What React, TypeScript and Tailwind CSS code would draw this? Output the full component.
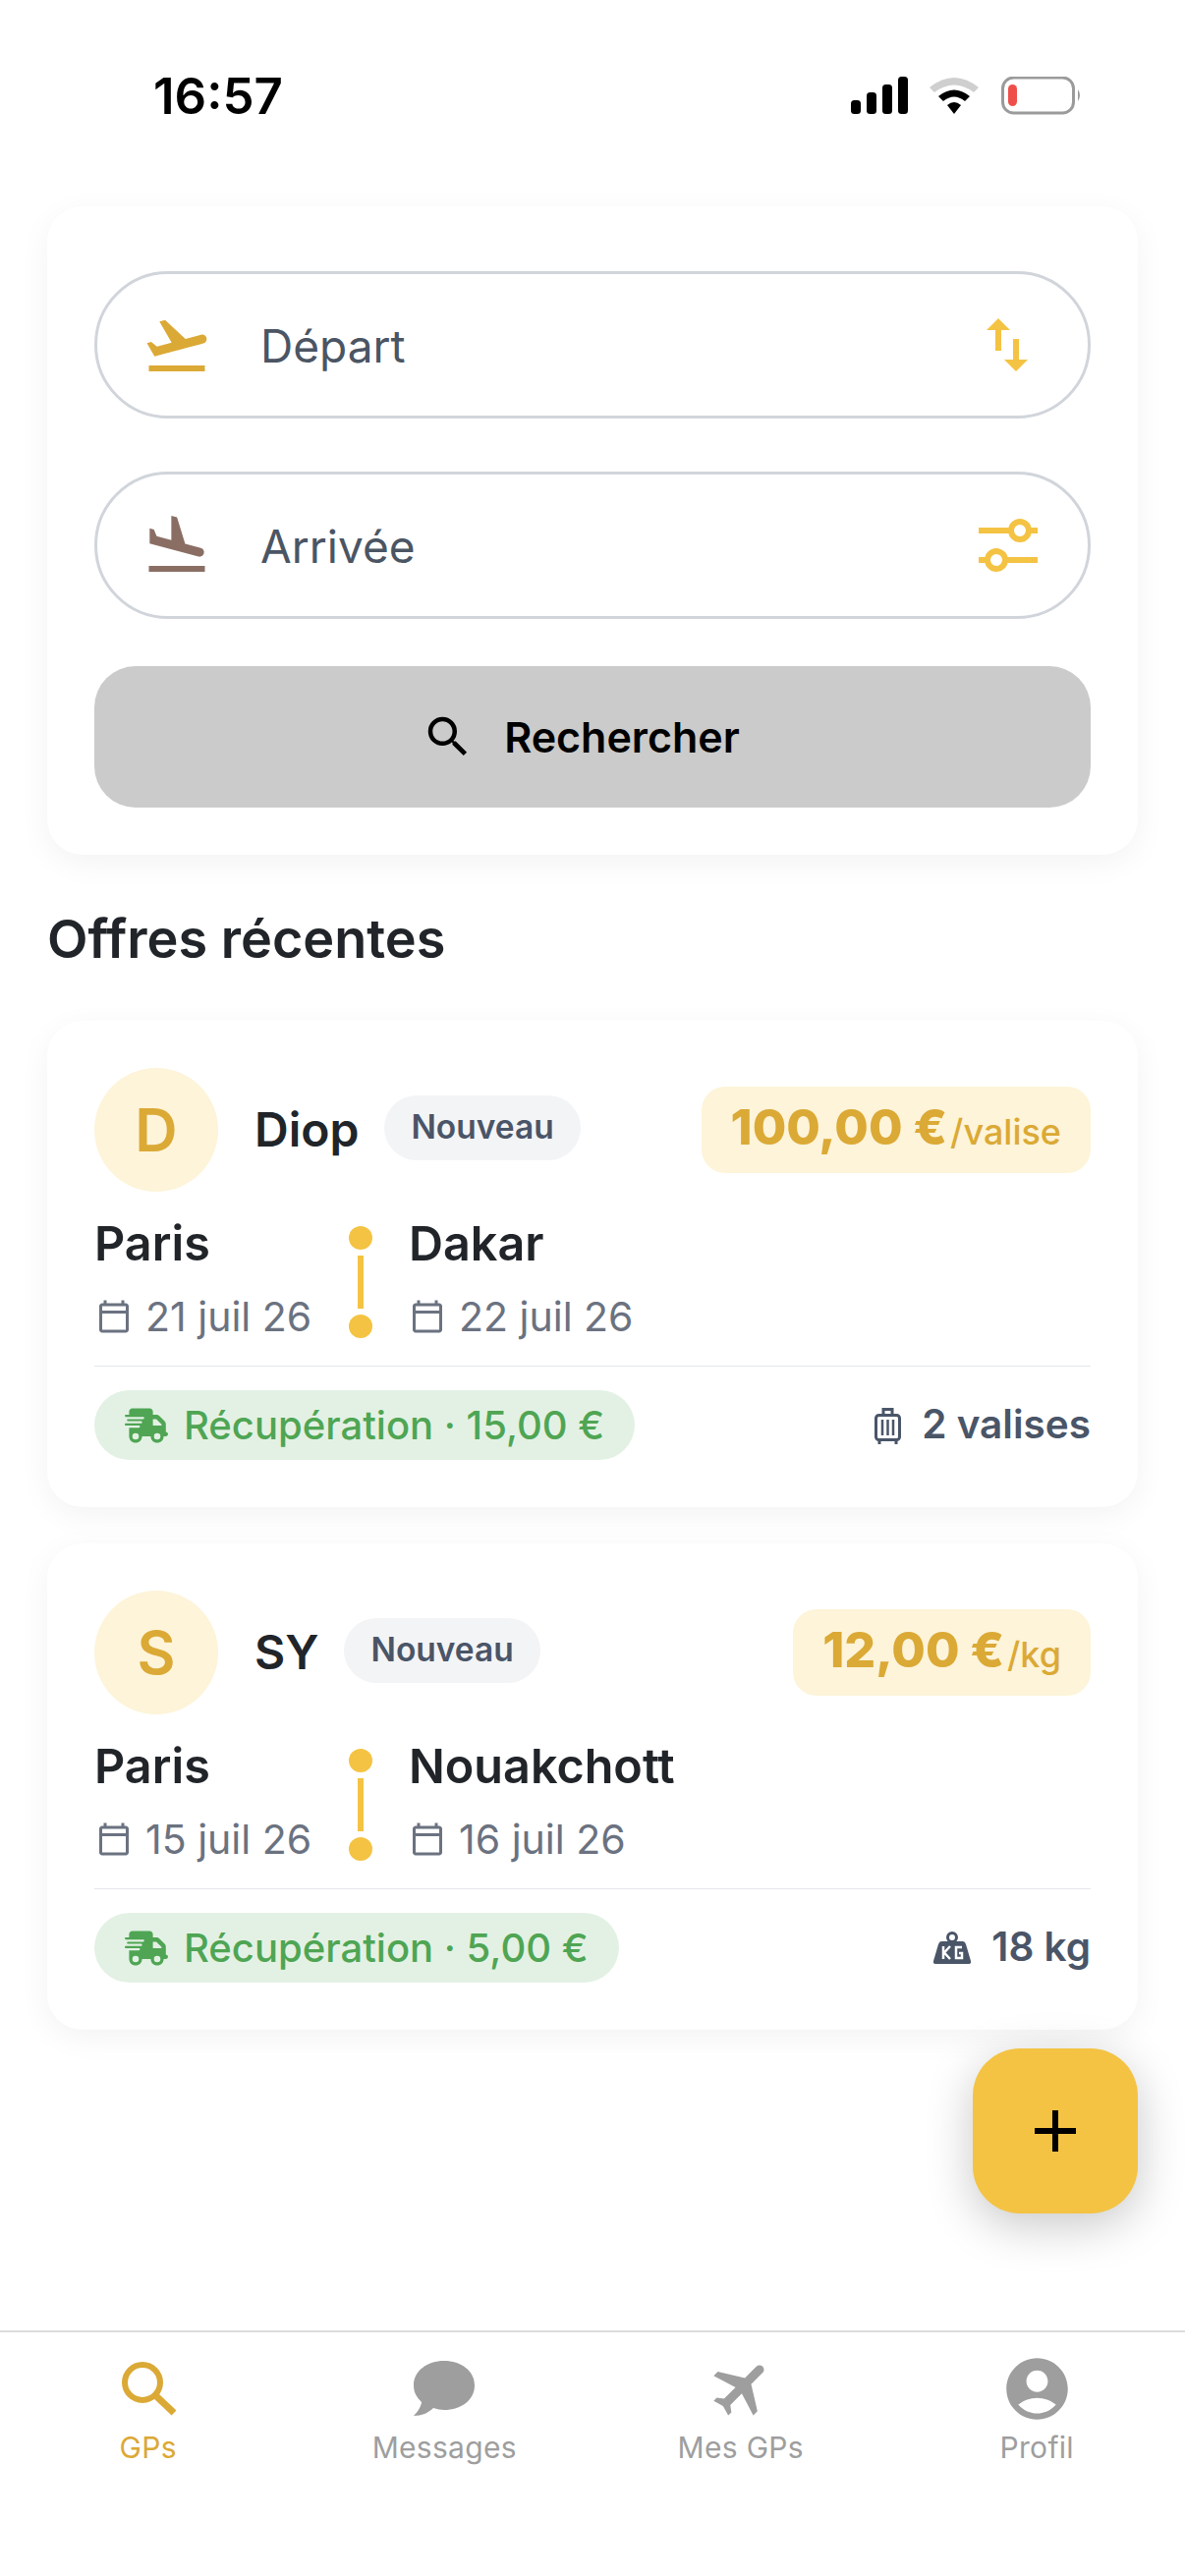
import { FaTruckFast } from 'react-icons/fa6';
import {
  MdAccountCircle,
  MdFlight,
  MdFlightLand,
  MdFlightTakeoff,
  MdOutlineCalendarToday,
  MdSearch,
  MdSwapVert,
} from 'react-icons/md';

const offers = [
  {
    initial: 'D',
    name: 'Diop',
    price: '100,00 €',
    unit: '/valise',
    to: 'Dakar',
    fromDate: '21 juil 26',
    toDate: '22 juil 26',
    pickup: 'Récupération · 15,00 €',
    amount: '2 valises',
    luggage: true,
  },
  {
    initial: 'S',
    name: 'SY',
    price: '12,00 €',
    unit: '/kg',
    to: 'Nouakchott',
    fromDate: '15 juil 26',
    toDate: '16 juil 26',
    pickup: 'Récupération · 5,00 €',
    amount: '18 kg',
    luggage: false,
  },
];

function StatusIcons() {
  return (
    <svg width="236" height="40" viewBox="0 0 236 40" className="shrink-0">
      <rect x="0" y="24" width="10" height="14" rx="3.5" fill="#000" />
      <rect x="16" y="16" width="10" height="22" rx="3.5" fill="#000" />
      <rect x="32" y="8" width="10" height="30" rx="3.5" fill="#000" />
      <rect x="48" y="0" width="10" height="38" rx="3.5" fill="#000" />
      <path d="M80 11 Q105 -9 130 11 L125 16 Q105 1 85 16Z" fill="#cfcfcf" />
      <path d="M89 20 Q105 7 121 20 L116 25 Q105 16 94 25Z" fill="#000" />
      <path d="M98 29 Q105 23 112 29 L105 38Z" fill="#000" />
      <rect x="154.5" y="1" width="72" height="36" rx="11" fill="none" stroke="#9b9b9b" strokeWidth="3" />
      <rect x="160" y="8" width="9" height="22" rx="4.5" fill="#ef4f4a" />
      <path d="M231 13 Q235 19 231 25Z" fill="#9b9b9b" />
    </svg>
  );
}

function SliderIcon() {
  return (
    <svg width="60" height="54" viewBox="0 0 60 54" className="shrink-0">
      <path d="M0 12H33M51 12H60M0 42H9M27 42H60" stroke="#f4c343" strokeWidth="6" />
      <circle cx="42" cy="12" r="9" fill="none" stroke="#f4c343" strokeWidth="6" />
      <circle cx="18" cy="42" r="9" fill="none" stroke="#f4c343" strokeWidth="6" />
    </svg>
  );
}

function LuggageIcon() {
  return (
    <svg width="27" height="38" viewBox="0 0 27 38" className="shrink-0">
      <path d="M9 8V2.5H18V8" fill="none" stroke="#4a5568" strokeWidth="3" />
      <rect x="1.5" y="8.5" width="24" height="25" rx="3" fill="none" stroke="#4a5568" strokeWidth="3" />
      <path d="M8 13V29M13.5 13V29M19 13V29" stroke="#4a5568" strokeWidth="2.5" />
      <path d="M5 34V38M22 34V38" stroke="#4a5568" strokeWidth="3" />
    </svg>
  );
}

function WeightIcon() {
  return (
    <svg width="38" height="34" viewBox="0 0 38 34" className="shrink-0">
      <circle cx="19" cy="6" r="4.5" fill="none" stroke="#4a5568" strokeWidth="3" />
      <path d="M8 10H30Q32 10 33 13L38 30Q38.500 33 36 33H2Q-0.500 33 0 30L5 13Q6 10 8 10Z" fill="#4a5568" />
      <path d="M10 15V28M17 15L11 21.500L17 28" fill="none" stroke="#fff" strokeWidth="2.500" />
      <path d="M29 16H23V27H29V22H26" fill="none" stroke="#fff" strokeWidth="2.500" />
    </svg>
  );
}

function SearchTabIcon() {
  return (
    <svg width="56" height="56" viewBox="0 0 56 56" className="shrink-0">
      <circle cx="22" cy="22" r="18" fill="none" stroke="#dba935" strokeWidth="6" />
      <path d="M35 35L54 53" stroke="#dba935" strokeWidth="7" />
    </svg>
  );
}

function ChatTabIcon() {
  return (
    <svg width="62" height="56" viewBox="0 0 62 56" className="shrink-0">
      <path
        d="M31 0C48 0 62 10 62 25C62 40 48 50 31 50C27 50 24 49 20 48C15 53 8 56 0 56C5 51 8 45 8 42C3 37 0 32 0 25C0 10 14 0 31 0Z"
        fill="#9e9e9e"
      />
    </svg>
  );
}

function DateLine({ date }: { date: string }) {
  return (
    <div className="flex items-center gap-[14px] h-[58px] pl-[2px]">
      <MdOutlineCalendarToday size={36} className="text-[#6b7280] shrink-0" />
      <span className="text-[41px] leading-[58px] text-[#6b7280] whitespace-nowrap">{date}</span>
    </div>
  );
}

function OfferCard({ offer }: { offer: (typeof offers)[number] }) {
  return (
    <div className="bg-white rounded-[36px] shadow-[0_8px_32px_rgba(0,0,0,0.05)] p-12">
      <div className="flex items-center">
        <div className="w-[126px] h-[126px] rounded-full bg-[#fdf4d9] flex items-center justify-center text-[60px] font-semibold text-[#dba935]">
          {offer.initial}
        </div>
        <span className="ml-[37px] text-[48px] font-semibold text-[#212529]">{offer.name}</span>
        <span className="ml-[26px] h-[66px] px-[27px] rounded-full bg-[#f3f4f6] flex items-center text-[33.5px] font-semibold text-[#4a5568] -mt-[5px]">
          Nouveau
        </span>
        <div className="ml-auto h-[88px] px-[30px] rounded-[24px] bg-[#fdf4d9] flex items-baseline pt-[4px] text-[#dba935] whitespace-nowrap">
          <span className="text-[50px] font-extrabold">{offer.price}</span>
          <span className="text-[36px] font-medium ml-[3px]">{offer.unit}</span>
        </div>
      </div>

      <div className="flex mt-6">
        <div className="w-[222px]">
          <div className="text-[48.5px] leading-[58px] font-semibold text-[#212529] mb-4">Paris</div>
          <DateLine date={offer.fromDate} />
        </div>
        <div className="w-[24px] ml-[37px] pt-[11px] flex flex-col items-center">
          <div className="w-6 h-6 rounded-full bg-[#f4c343]" />
          <div className="w-[6px] h-[54px] my-[6px] bg-[#f4c343]" />
          <div className="w-6 h-6 rounded-full bg-[#f4c343]" />
        </div>
        <div className="ml-[37px]">
          <div className="text-[48.5px] leading-[58px] font-semibold text-[#212529] mb-4">{offer.to}</div>
          <div className="-ml-[1px]">
            <DateLine date={offer.toDate} />
          </div>
        </div>
      </div>

      <div className="mt-[21px] pt-6 border-t border-[#e5e7eb] flex items-center justify-between">
        <div className="h-[71px] px-[31px] rounded-full bg-[#e3f1e4] flex items-center gap-[16px] text-[40px] font-medium text-[#4fa553] whitespace-nowrap">
          <FaTruckFast size={44} className="shrink-0" />
          <span>{offer.pickup}</span>
        </div>
        <div className="flex items-center gap-[21px] text-[40.5px] font-semibold text-[#4a5568] whitespace-nowrap">
          {offer.luggage ? <LuggageIcon /> : <WeightIcon />}
          <span>{offer.amount}</span>
        </div>
      </div>
    </div>
  );
}

export default function App() {
  return (
    <div className="relative w-[1206px] h-[2622px] bg-white overflow-hidden flex flex-col font-['Inter',sans-serif]">
      <div className="h-[210px] shrink-0 flex items-start justify-between pl-[156px] pr-[104px] pt-[68px]">
        <span className="text-[51px] leading-[60px] font-semibold text-black">16:57</span>
        <div className="pt-[10px]">
          <StatusIcons />
        </div>
      </div>

      <div className="flex-1 px-12">
        <div className="bg-white rounded-[36px] shadow-[0_8px_32px_rgba(0,0,0,0.05)] px-12 pt-[66px] pb-12">
          <div className="h-[150px] rounded-full border-[3px] border-[#d1d5db] flex items-center pl-[52px] pr-[46px]">
            <MdFlightTakeoff size={72} className="text-[#dba935] shrink-0 -ml-[7px]" />
            <span className="ml-[49px] pt-[3px] text-[46px] text-[#4b5563]">Départ</span>
            <MdSwapVert size={72} className="ml-auto text-[#f4c343] shrink-0" />
          </div>
          <div className="mt-[54px] h-[150px] rounded-full border-[3px] border-[#d1d5db] flex items-center pl-[52px] pr-[51px]">
            <MdFlightLand size={72} className="text-[#8a6e64] shrink-0 -ml-[7px]" />
            <span className="ml-[49px] pt-[3px] text-[46px] text-[#4b5563]">Arrivée</span>
            <div className="ml-auto">
              <SliderIcon />
            </div>
          </div>
          <button className="mt-12 w-full h-[144px] rounded-[42px] bg-[#cbcbcb] flex items-center justify-center gap-[30px] pr-[24px] text-[43px] font-semibold text-black">
            <MdSearch size={54} />
            <span>Rechercher</span>
          </button>
        </div>

        <h2 className="mt-[53px] mb-[50px] text-[54px] leading-[66px] font-semibold text-[#212529]">Offres récentes</h2>

        <div className="flex flex-col gap-[37px]">
          {offers.map((offer) => (
            <OfferCard key={offer.name} offer={offer} />
          ))}
        </div>
      </div>

      <button className="absolute left-[990px] top-[2085px] w-[168px] h-[168px] rounded-[48px] bg-[#f4c343] flex items-center justify-center shadow-[0_12px_48px_rgba(0,0,0,0.22)]">
        <span className="relative block w-[42px] h-[42px]">
          <span className="absolute left-[18px] top-0 w-[6px] h-[42px] bg-black" />
          <span className="absolute left-0 top-[18px] w-[42px] h-[6px] bg-black" />
        </span>
      </button>

      <nav className="h-[250px] shrink-0 border-t-2 border-[#dcdcdc] bg-white grid grid-cols-4 text-[30px] text-[#9e9e9e] tracking-[0.3px]">
        <div className="flex flex-col items-center pt-[21px]">
          <div className="h-[72px] flex items-center justify-center">
            <SearchTabIcon />
          </div>
          <span className="mt-[4px] leading-[40px] text-[#dba935]">GPs</span>
        </div>
        <div className="flex flex-col items-center pt-[21px]">
          <div className="h-[72px] flex items-center justify-center">
            <ChatTabIcon />
          </div>
          <span className="mt-[4px] leading-[40px]">Messages</span>
        </div>
        <div className="flex flex-col items-center pt-[21px]">
          <div className="h-[72px] flex items-center justify-center">
            <MdFlight size={72} className="rotate-45 translate-x-[2px]" />
          </div>
          <span className="mt-[4px] leading-[40px]">Mes GPs</span>
        </div>
        <div className="flex flex-col items-center pt-[21px]">
          <div className="h-[72px] flex items-center justify-center">
            <MdAccountCircle size={75} />
          </div>
          <span className="mt-[4px] leading-[40px]">Profil</span>
        </div>
      </nav>
    </div>
  );
}
